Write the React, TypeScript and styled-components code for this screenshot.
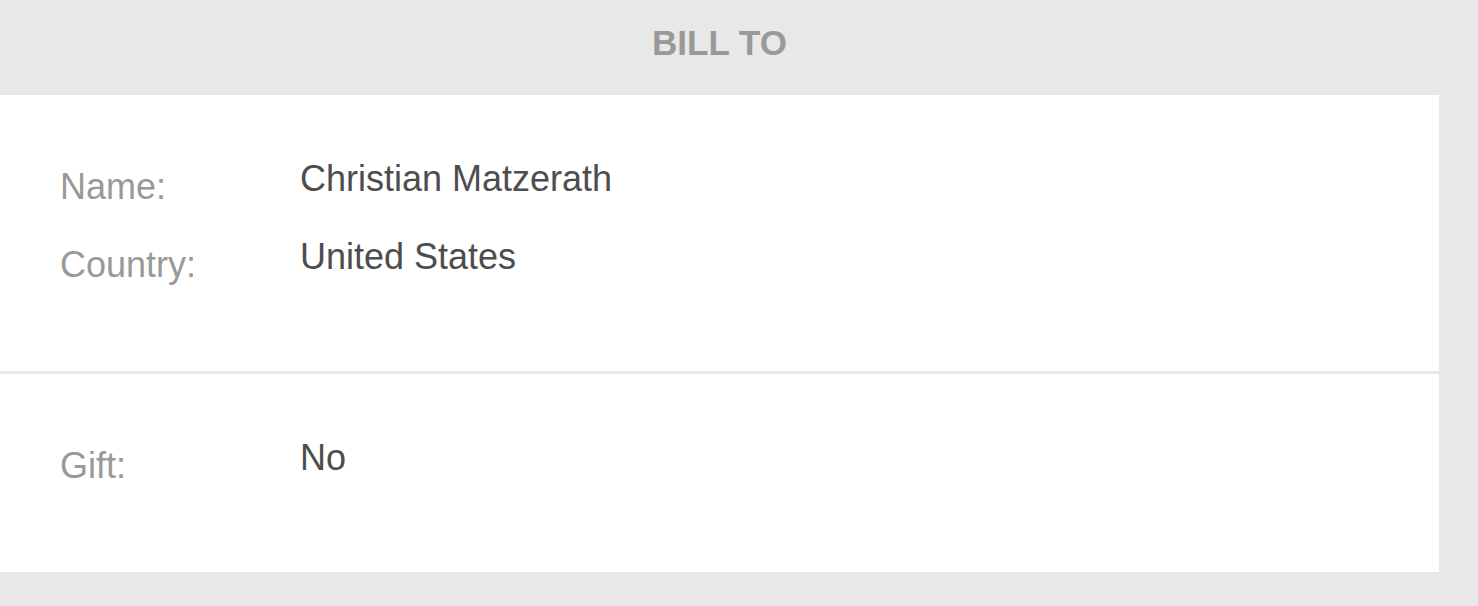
import styled, { createGlobalStyle } from "styled-components";

const GlobalStyle = createGlobalStyle`
  html, body {
    margin: 0;
    padding: 0;
    background: #e8e8e8;
    font-family: "Liberation Sans", Arial, Helvetica, sans-serif;
  }
`;

type Field = { label: string; value: string };

const billTo: Field[] = [
  { label: "Name:", value: "Christian Matzerath" },
  { label: "Country:", value: "United States" },
];

const extras: Field[] = [{ label: "Gift:", value: "No" }];

export default function App() {
  return (
    <>
      <GlobalStyle />
      <Page>
        <Title>BILL TO</Title>
        <Card>
          <Section>
            {billTo.map((f) => (
              <Row key={f.label}>
                <Label>{f.label}</Label>
                <Value>{f.value}</Value>
              </Row>
            ))}
          </Section>
          <Section $divided>
            {extras.map((f) => (
              <Row key={f.label}>
                <Label>{f.label}</Label>
                <Value>{f.value}</Value>
              </Row>
            ))}
          </Section>
        </Card>
      </Page>
    </>
  );
}

const Page = styled.div`
  width: 1439px;
  min-height: 606px;
`;

const Title = styled.h2`
  margin: 0;
  padding: 23px 0 32px;
  line-height: 40px;
  font-size: 35px;
  font-weight: 700;
  color: #999999;
  text-align: center;
`;

const Card = styled.div`
  background: #ffffff;
`;

const Section = styled.div<{ $divided?: boolean }>`
  display: flex;
  flex-direction: column;
  gap: 38px;
  padding: 64px 0 ${(p) => (p.$divided ? "94px" : "94px")} 60px;
  border-top: ${(p) => (p.$divided ? "3px solid #e8e8e8" : "none")};
`;

const Row = styled.div`
  display: grid;
  grid-template-columns: 240px 1fr;
  height: 40px;
`;

const Label = styled.div`
  margin-top: 8px;
  font-size: 36px;
  line-height: 40px;
  color: #999999;
`;

const Value = styled.div`
  font-size: 36px;
  line-height: 40px;
  color: #4d4d4d;
`;
